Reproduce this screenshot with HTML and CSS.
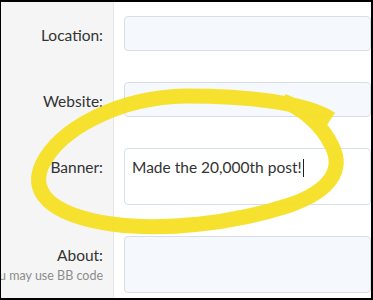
FILE: index.html
```html
<!DOCTYPE html>
<html>

<head>
    <meta charset="utf-8">
    <title>Profile</title>
    <link rel="stylesheet" href="styles.css">
</head>

<body>
    <div class="frame">
        <div class="row">
            <div class="label">Location:</div>
            <div class="field"><div class="input"></div></div>
        </div>
        <div class="row">
            <div class="label">Website:</div>
            <div class="field"><div class="input"></div></div>
        </div>
        <div class="row">
            <div class="label">Banner:</div>
            <div class="field">
                <div class="input area focus">Made the 20,000th post!<span class="caret"></span></div>
            </div>
        </div>
        <div class="row">
            <div class="label">
                About:
                <div class="hint"><span>You may use BB code</span></div>
            </div>
            <div class="field"><div class="input area"></div></div>
        </div>
    </div>
    <!-- yellow marker circle drawn over the form -->
    <svg class="scribble" width="373" height="300" viewBox="0 0 373 300">
        <path d="M 331 119 C 305 102, 245 96, 186 96 C 120 97, 60 128, 42 165 C 27 198, 62 217, 112 224 C 162 231, 232 224, 290 205 C 330 191, 344 170, 332 146 C 322 125, 302 108, 283 101"
            fill="none" stroke="#f5e01c" stroke-width="15" stroke-linecap="butt" stroke-linejoin="round" opacity="0.92" />
    </svg>
</body>

</html>
```

FILE: styles.css
```css
* {
    margin: 0;
    padding: 0;
    box-sizing: border-box;
}

body {
    background: #000;
    font-family: Lato, "Open Sans", sans-serif;
    font-size: 15.5px;
    color: #333;
}

.frame {
    margin: 2px 2px 2px 1px;
    height: 296px;
    background: #fff;
    overflow: hidden;
}

.row {
    display: grid;
    grid-template-columns: 113px 1fr;
}

.label {
    background: #f5f5f5;
    border-right: 1px solid #e6e6e6;
    padding: 23px 10px 0 0;
    text-align: right;
    line-height: 20px;
    min-width: 0;
}

.hint {
    display: flex;
    justify-content: flex-end;
    overflow: hidden;
    white-space: nowrap;
    margin-top: 1px;
    font-size: 12.5px;
    color: #8c8c8c;
}

.field {
    padding: 14px 0 17px 10px;
}

.input {
    height: 35px;
    background: #f5f9fd;
    border: 1px solid #d9dee4;
    border-radius: 4px;
}

.area {
    height: 57px;
    padding: 8px 7px;
    line-height: 20px;
}

.focus {
    background: #fff;
    border-color: #d5e0ec;
}

.caret {
    display: inline-block;
    width: 1px;
    height: 18px;
    margin-left: 1px;
    vertical-align: -4px;
    background: #222;
}

.scribble {
    position: absolute;
    left: 0;
    top: 0;
    pointer-events: none;
}
```
